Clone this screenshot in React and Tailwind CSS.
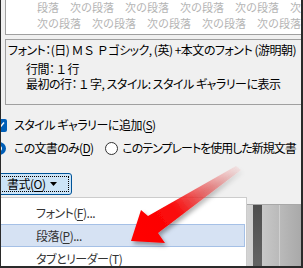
import React from 'react';

const Key = ({ children }) => <span className="underline underline-offset-2">{children}</span>;

const previewRows = [
  '段落　次の段落　次の段落　次の段落　次の段落　次の',
  '次の段落　次の段落　次の段落　次の段落　次の段落',
  '段落　次の段落　次の段落　次の段落',
];

const Arrow = () => (
  <svg className="absolute left-0 top-0 pointer-events-none" width="303" height="268" viewBox="0 0 303 268">
    <defs>
      <linearGradient id="arrowFill" gradientUnits="userSpaceOnUse" x1="140" y1="236" x2="240" y2="166">
        <stop offset="0" stopColor="#ff0000" stopOpacity="1" />
        <stop offset="0.35" stopColor="#fa0a0a" stopOpacity="1" />
        <stop offset="0.7" stopColor="#e84848" stopOpacity="0.55" />
        <stop offset="1" stopColor="#f08080" stopOpacity="0.08" />
      </linearGradient>
      <filter id="arrowShadow" x="-20%" y="-20%" width="140%" height="140%">
        <feDropShadow dx="2" dy="3" stdDeviation="2" floodColor="#000" floodOpacity="0.35" />
      </filter>
    </defs>
    <polygon
      points="235,166 147,216 140,210 130,241 164,243 157,233 240,170"
      fill="url(#arrowFill)"
      filter="url(#arrowShadow)"
    />
  </svg>
);

export default function App() {
  return (
    <div className="relative w-[303px] h-[268px] overflow-hidden bg-[#f0f0f0] border-l border-r-2 border-b-2 border-[#2a2a2a] font-['Noto_Sans_CJK_JP',sans-serif] text-[12px] text-black [font-feature-settings:'palt'] tracking-[-0.5px]">
      {/* preview */}
      <div className="ml-[4px] h-[35px] bg-white border-l border-b border-[#a0a0a0] overflow-hidden">
        <div className="-mt-[1px] pl-[31px] text-[11px] leading-[16px] text-[#b4b4b4] whitespace-nowrap tracking-normal [font-feature-settings:normal]">
          {previewRows.map((r, i) => (
            <div key={i}>{r}</div>
          ))}
        </div>
      </div>

      {/* description */}
      <div className="ml-[4px] mt-[4px] h-[66px] border-l border-t border-b border-[#a0a0a0] whitespace-nowrap overflow-hidden pt-[2px]">
        <div className="pl-[2px] leading-[16px]">
          フォント：(日) <span className="[font-feature-settings:normal]">ＭＳ Ｐ</span>ゴシック, (英) +本文のフォント (游明朝)
        </div>
        <div className="pl-[20px] mt-[3px] leading-[15px]">行間： １ 行</div>
        <div className="pl-[20px] leading-[15px]">最初の行： １ 字, スタイル: スタイル ギャラリーに表示</div>
      </div>

      {/* checkbox */}
      <div className="mt-[12px] h-[16px] flex items-center whitespace-nowrap">
        <div className="shrink-0 -ml-[7px] w-[13px] h-[13px] rounded-[2px] bg-[#005fb8] flex items-center justify-center">
          <svg width="9" height="9" viewBox="0 0 9 9">
            <path d="M1 4.5 L3.5 7 L8 1.5" fill="none" stroke="#fff" strokeWidth="1.4" />
          </svg>
        </div>
        <span className="ml-[7px]">スタイル ギャラリーに追加(<Key>S</Key>)</span>
      </div>

      {/* radios */}
      <div className="mt-[7px] h-[16px] flex items-center whitespace-nowrap">
        <div className="shrink-0 -ml-[8px] w-[13px] h-[13px] rounded-full border-[4px] border-[#005fb8] bg-white" />
        <span className="ml-[8px] tracking-[-0.7px]">この文書のみ(<Key>D</Key>)</span>
        <div className="shrink-0 ml-[12px] w-[13px] h-[13px] rounded-full border border-[#333] bg-white" />
        <span className="ml-[4px] tracking-[-1px]">このテンプレートを使用した新規文書</span>
      </div>

      {/* bottom */}
      <div className="mt-[17px] flex">
        <div className="w-[246px] shrink-0">
          <div className="-ml-[4px] w-[75px] h-[22px] rounded-r-[3px] bg-[#cce4f7] border border-[#005499] p-[2px]">
            <div className="h-full border border-dotted border-black flex items-center pl-[6px]">
              <span>書式(<Key>O</Key>)</span>
              <svg className="ml-[4px]" width="7" height="4" viewBox="0 0 7 4">
                <path d="M0 0 H7 L3.5 4 Z" fill="#000" />
              </svg>
            </div>
          </div>
          <div className="mt-[2px] h-[80px] bg-white border-t border-r border-[#cccccc] pr-[1px] pt-[3px]">
            <div className="h-[23px] flex items-center pl-[35px] text-[#333]">フォント(<Key>F</Key>)...</div>
            <div className="h-[23px] flex items-center pl-[35px] text-[#333] bg-[#d6e2f3] border border-l-0 border-[#a5c0e6]">段落(<Key>P</Key>)...</div>
            <div className="h-[23px] flex items-center pl-[35px] text-[#333]">タブとリーダー(<Key>T</Key>)</div>
          </div>
        </div>
        <div className="flex-1 mt-[31px] h-[80px] border-t border-[#a8a8a8] bg-gradient-to-r from-[#d4d4d4] to-[#a9a9a9] flex">
          <div className="ml-[6px] w-[9px] bg-gradient-to-b from-[#4e4e4e] to-[#6a6a6a]" />
          <div className="ml-[17px] w-px bg-[#d0d0d0]" />
        </div>
      </div>

      <Arrow />
    </div>
  );
}
